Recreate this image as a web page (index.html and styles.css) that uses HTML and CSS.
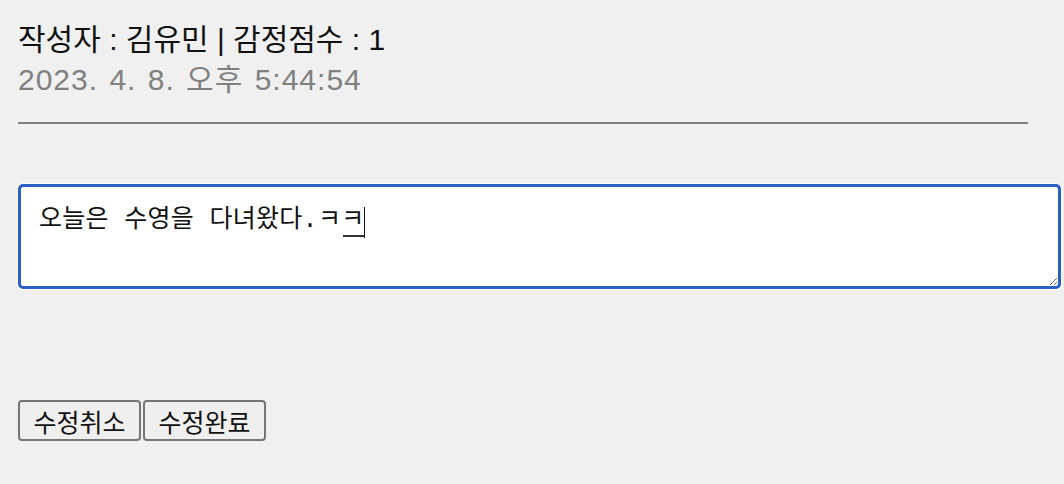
FILE: index.html
```html
<!DOCTYPE html>
<html lang="ko">
<head>
<meta charset="utf-8">
<link rel="stylesheet" href="styles.css">
</head>
<body>
<div class="page">
  <div class="meta">
    <div class="author">작성자 : 김유민 | 감정점수 : 1</div>
    <div class="date">2023. 4. 8. 오후 5:44:54</div>
  </div>
  <hr class="divider">
  <div class="editor">
    <textarea class="content">오늘은 수영을 다녀왔다.ㅋㅋ</textarea>
    <span class="ime-mark"></span>
    <span class="caret"></span>
  </div>
  <div class="actions">
    <button class="btn">수정취소</button><button class="btn">수정완료</button>
  </div>
</div>
</body>
</html>
```

FILE: styles.css
```css
html, body {
  margin: 0;
  padding: 0;
  background: #f0f0f0;
}
.page {
  padding: 20px 0 0 18px;
  font-family: "Liberation Sans", "Noto Sans CJK KR", sans-serif;
}
.meta {
  display: flex;
  flex-direction: column;
}
.author {
  font-size: 30px;
  line-height: 40px;
  color: #111;
}
.date {
  font-size: 30px;
  line-height: 40px;
  letter-spacing: 1px;
  word-spacing: 2px;
  color: #808080;
}
.divider {
  width: 1010px;
  margin: 22px 0 0 0;
  border: none;
  border-top: 2px solid #808080;
  height: 0;
}
.editor {
  margin-top: 60px;
  position: relative;
  width: 1043px;
}
.content {
  box-sizing: border-box;
  width: 1043px;
  height: 105px;
  border: 3px solid #2a5fc8;
  border-radius: 5px;
  box-shadow: 0 0 0 1px #fff;
  background: #fff;
  padding: 19px 18px 10px;
  font-family: "Liberation Mono", "Noto Sans CJK KR", monospace;
  font-size: 25px;
  line-height: 30px;
  letter-spacing: 0.3px;
  color: #111;
  outline: none;
  display: block;
  margin: 0;
  resize: both;
}
.ime-mark {
  position: absolute;
  left: 325px;
  top: 51px;
  width: 21px;
  height: 2px;
  background: #333;
}
.caret {
  position: absolute;
  left: 346px;
  top: 23px;
  width: 1px;
  height: 31px;
  background: #111;
}
.actions {
  margin-top: 111px;
  display: flex;
  gap: 2px;
}
.btn {
  box-sizing: border-box;
  height: 41px;
  width: 123px;
  font-family: "Liberation Sans", "Noto Sans CJK KR", sans-serif;
  font-size: 25px;
  color: #111;
  background: #efefef;
  border: 2px solid #767676;
  border-radius: 4px;
  padding: 0;
}
```
